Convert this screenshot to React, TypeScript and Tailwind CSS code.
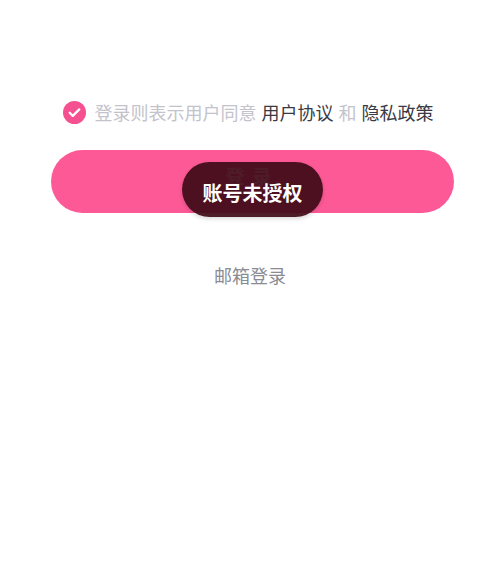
import React from "react";

function CheckCircle() {
  return (
    <svg width="23" height="23" viewBox="0 0 24 24" className="shrink-0">
      <circle cx="12" cy="12" r="12" fill="#f5508f" />
      <path
        d="M7 12.3l3.2 3.2L17 8.8"
        fill="none"
        stroke="#ffffff"
        strokeWidth="2.4"
        strokeLinecap="round"
        strokeLinejoin="round"
      />
    </svg>
  );
}

export default function App() {
  return (
    <div
      className="h-[581px] w-[500px] bg-white"
      style={{ fontFamily: '"Noto Sans CJK SC", "Noto Sans", sans-serif' }}
    >
      {/* agreement */}
      <div className="flex items-center justify-center gap-[9px] pt-[101px] pr-[4px]">
        <CheckCircle />
        <p className="text-[18px] leading-[23px] text-[#c3c3cb]">
          登录则表示用户同意
          <span className="mx-[5px] text-[#3a3a44]">用户协议</span>
          和
          <span className="ml-[5px] text-[#3a3a44]">隐私政策</span>
        </p>
      </div>

      {/* login button + toast */}
      <div className="relative ml-[51px] mr-[46px] mt-[26px]">
        <button className="flex h-[63px] w-full items-start justify-center rounded-full bg-[#fd5997] pt-[12px] text-[19px] font-bold tracking-[8px] text-white">
          登录
        </button>

        <div className="absolute left-[131px] top-[12px] flex h-[55px] w-[141px] items-center justify-center rounded-[28px] bg-[#3f0b17]/[0.93] shadow-[0_2px_4px_rgba(0,0,0,0.15)]">
          <span className="pt-[6px] text-[20px] font-bold text-white">账号未授权</span>
        </div>
      </div>

      {/* email login */}
      <p className="mt-[50px] text-center text-[18px] leading-[24px] text-[#8b8b94]">邮箱登录</p>
    </div>
  );
}
